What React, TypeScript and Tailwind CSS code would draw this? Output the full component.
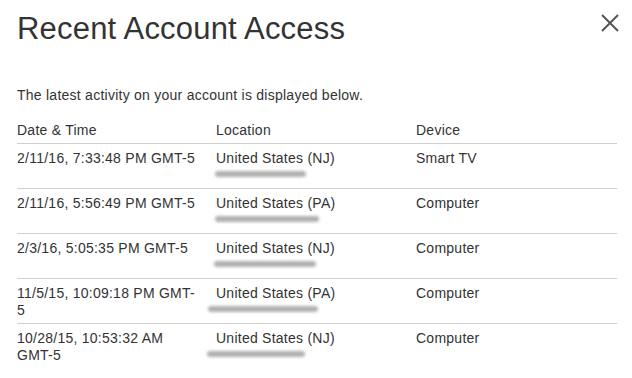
const rows = [
  { date: ["2/11/16, 7:33:48 PM GMT-5"], loc: "United States (NJ)", device: "Smart TV", bar: { ml: "ml-[-1px]", w: "w-[91px]" } },
  { date: ["2/11/16, 5:56:49 PM GMT-5"], loc: "United States (PA)", device: "Computer", bar: { ml: "ml-[-1px]", w: "w-[104px]" } },
  { date: ["2/3/16, 5:05:35 PM GMT-5"], loc: "United States (NJ)", device: "Computer", bar: { ml: "ml-[-2px]", w: "w-[102px]" } },
  { date: ["11/5/15, 10:09:18 PM GMT-", "5"], loc: "United States (PA)", device: "Computer", bar: { ml: "ml-[-8px]", w: "w-[110px]" } },
  { date: ["10/28/15, 10:53:32 AM", "GMT-5"], loc: "United States (NJ)", device: "Computer", bar: { ml: "ml-[-9px]", w: "w-[98px]" } },
];

function CloseIcon() {
  return (
    <svg width="20" height="20" viewBox="0 0 20 20" className="text-[#555]">
      <path d="M2 2 L18 18 M18 2 L2 18" stroke="currentColor" strokeWidth="2" fill="none" />
    </svg>
  );
}

export default function App() {
  return (
    <div className="w-[632px] h-[378px] bg-white overflow-hidden text-[#333] font-['Liberation_Sans',Arial,sans-serif] px-[17px]">
      <div className="flex items-start justify-between pt-[11px]">
        <h1 className="text-[31px] leading-[36px] font-normal tracking-[0.2px]">Recent Account Access</h1>
        <button className="mt-[2px] mr-[-5px]">
          <CloseIcon />
        </button>
      </div>

      <p className="mt-[40px] text-[14px] leading-[17px] tracking-[0.25px]">
        The latest activity on your account is displayed below.
      </p>

      <div className="mt-[18px] w-[600px] text-[14px] leading-[17px] tracking-[0.25px]">
        <div className="grid grid-cols-[199px_200px_201px] pb-[4px] border-b border-[#d0d0d0]">
          <div>Date &amp; Time</div>
          <div>Location</div>
          <div>Device</div>
        </div>
        {rows.map((r, i) => (
          <div
            key={i}
            className={"grid grid-cols-[199px_200px_201px] pt-[6px] pb-[4px] " + (i < rows.length - 1 ? "border-b border-[#d0d0d0]" : "")}
          >
            <div className="h-[34px]">
              {r.date.map((d, j) => (
                <div key={j} className="whitespace-nowrap">{d}</div>
              ))}
            </div>
            <div>
              <div className="whitespace-nowrap">{r.loc}</div>
              <div className="h-[17px] flex items-center">
                <div className={"h-[6px] mt-[-3px] rounded-full bg-[#b0b0b0] blur-[1.5px] " + r.bar.ml + " " + r.bar.w}></div>
              </div>
            </div>
            <div>{r.device}</div>
          </div>
        ))}
      </div>
    </div>
  );
}
